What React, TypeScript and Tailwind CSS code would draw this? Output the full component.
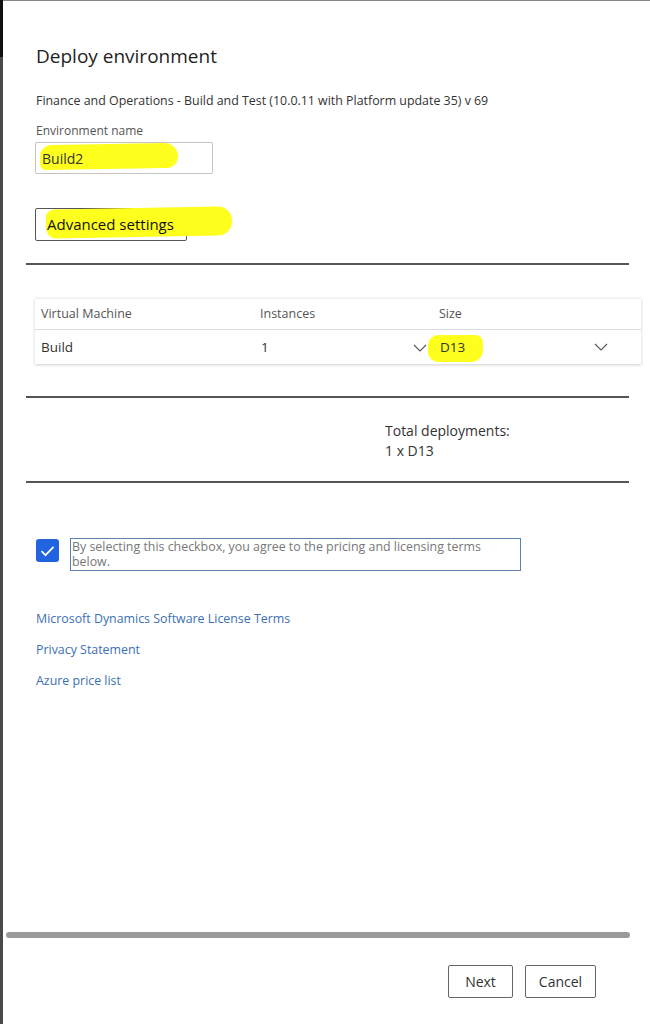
import React from 'react';

const Chevron = () => (
  <svg width="14" height="8" viewBox="0 0 14 8" fill="none" stroke="#555" strokeWidth="1.1">
    <path d="M1 1l6 6 6-6" />
  </svg>
);

const Rule = () => <div className="ml-[23px] w-[603px] h-[2px] bg-[#555]" />;

export default function App() {
  return (
    <div className="flex w-[650px] h-[1024px] bg-white text-[#222]" style={{ fontFamily: '"Open Sans", "Noto Sans", sans-serif' }}>
      {/* left window edge */}
      <div className="flex flex-col w-[3px] shrink-0">
        <div className="h-[57px] bg-[#111]" />
        <div className="flex-1 bg-[#4a4a4a]" />
      </div>

      <div className="flex flex-col flex-1 border-t border-[#888]">
        <h1 className="ml-[33px] mt-[42px] text-[19px] leading-[26px] font-medium text-[#1e1e1e]">Deploy environment</h1>

        <p className="ml-[33px] mt-[24px] text-[12.4px] leading-[16px] text-[#333]">
          Finance and Operations - Build and Test (10.0.11 with Platform update 35) v 69
        </p>

        <label className="ml-[33px] mt-[14px] text-[12px] leading-[16px] text-[#555]">Environment name</label>

        <div className="relative ml-[32px] mt-[3px] w-[178px] h-[32px] border border-[#c4c4c4] rounded-[2px] flex items-center">
          <div className="absolute left-[4px] top-[1px] w-[138px] h-[25px] bg-[#ffff1e] rounded-[12px_14px_12px_6px] -rotate-1" />
          <span className="relative pl-[6px] text-[14px] text-[#333]">Build2</span>
        </div>

        <div className="relative ml-[32px] mt-[34px] w-[152px] h-[33px] border border-[#555] rounded-[2px] flex items-center">
          <div className="absolute left-[10px] top-[-1px] w-[186px] h-[29px] bg-[#ffff1e] rounded-[8px_14px_14px_10px] -rotate-1" />
          <span className="relative pl-[11px] text-[15px] text-[#111]">Advanced settings</span>
        </div>

        <div className="mt-[22px]"><Rule /></div>

        {/* VM table */}
        <div className="ml-[32px] mt-[33px] w-[606px] bg-white shadow-[0_1px_3px_rgba(0,0,0,0.2)] border-t border-[#eee] text-[12.5px]">
          <div className="flex items-center h-[31px] border-b border-[#dcdcdc] text-[#555]">
            <span className="w-[225px] pl-[6px]">Virtual Machine</span>
            <span className="w-[179px]">Instances</span>
            <span>Size</span>
          </div>
          <div className="flex items-center h-[34px] text-[13.5px] text-[#333]">
            <span className="w-[225px] pl-[6px]">Build</span>
            <span className="w-[153px] pl-[1px]">1</span>
            <div className="w-[27px] flex justify-start pt-[1px]"><Chevron /></div>
            <div className="relative w-[154px] h-full flex items-center">
              <div className="absolute left-[-12px] top-[5px] w-[55px] h-[27px] bg-[#ffff1e] rounded-[10px_8px_12px_10px]" />
              <span className="relative">D13</span>
            </div>
            <Chevron />
          </div>
        </div>

        <div className="mt-[32px]"><Rule /></div>

        <div className="ml-[382px] mt-[23px] text-[14px] leading-[20px] text-[#333]">
          <div>Total deployments:</div>
          <div>1 x D13</div>
        </div>

        <div className="mt-[20px]"><Rule /></div>

        <div className="flex items-start ml-[33px] mt-[55px]">
          <div className="w-[23px] h-[23px] mt-[1px] rounded-[3px] bg-[#2264e0] flex items-center justify-center">
            <svg width="15" height="12" viewBox="0 0 15 12" fill="none" stroke="white" strokeWidth="1.7">
              <path d="M1.5 6.2l4 4L13.5 1.8" />
            </svg>
          </div>
          <div className="ml-[11px] w-[451px] h-[33px] border border-[#5d82b0] px-[1px] text-[12.4px] leading-[15px] text-[#777]">
            By selecting this checkbox, you agree to the pricing and licensing terms below.
          </div>
        </div>

        <div className="flex flex-col ml-[33px] mt-[40px] gap-[15px] text-[12.4px] leading-[16px] text-[#3b6fb3]">
          <a>Microsoft Dynamics Software License Terms</a>
          <a>Privacy Statement</a>
          <a>Azure price list</a>
        </div>

        <div className="flex-1" />

        <div className="ml-[3px] w-[624px] h-[6px] rounded-full bg-[#9a9a9a]" />

        <div className="flex justify-end gap-[12px] mr-[54px] mt-[27px] mb-[26px]">
          <button className="w-[65px] h-[33px] border border-[#666] rounded-[2px] text-[14px] text-[#333]">Next</button>
          <button className="w-[71px] h-[33px] border border-[#666] rounded-[2px] text-[14px] text-[#333]">Cancel</button>
        </div>
      </div>
    </div>
  );
}
